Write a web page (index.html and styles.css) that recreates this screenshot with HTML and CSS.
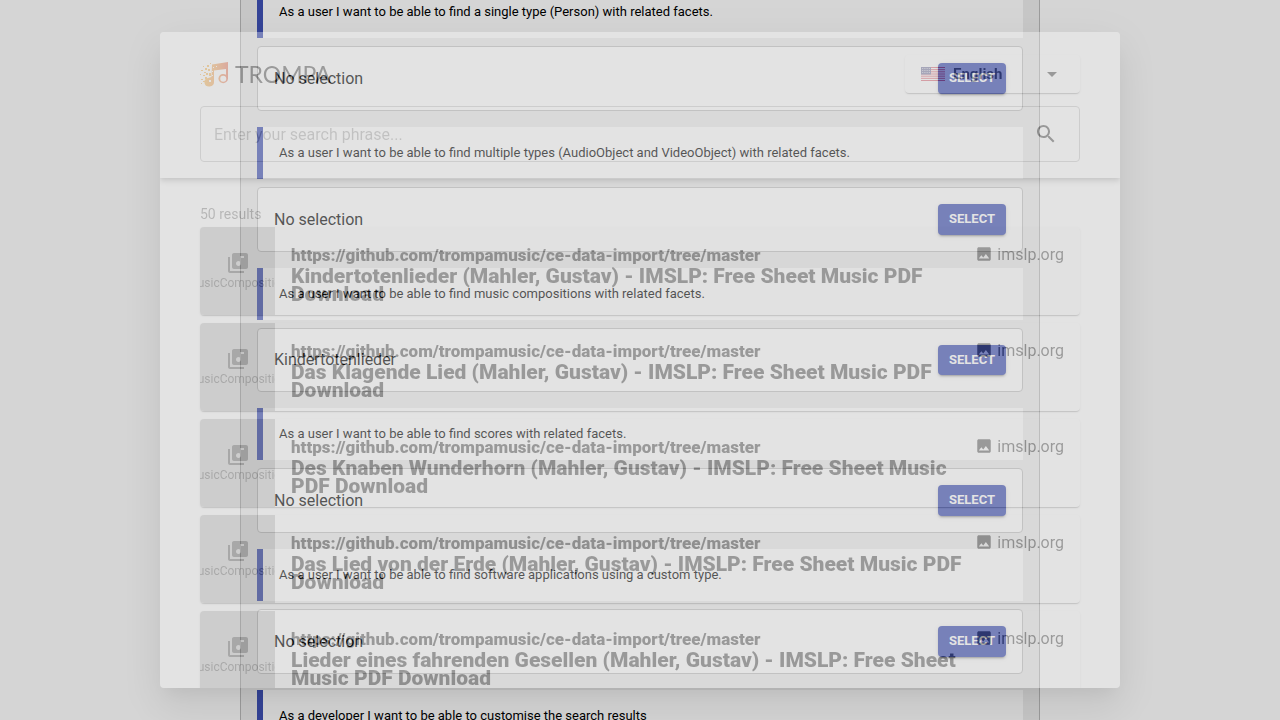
FILE: index.html
```html
<!DOCTYPE html>
<html lang="en">
<head>
<meta charset="utf-8">
<title>Trompa search</title>
<meta name="viewport" content="width=device-width, initial-scale=1">
<link rel="stylesheet" href="styles.css">
</head>
<body>
<svg class="defs" aria-hidden="true">
  <symbol id="library-music" viewBox="0 0 24 24"><path d="M20 2H8c-1.100 0-2 .9-2 2v12c0 1.100.9 2 2 2h12c1.100 0 2-.9 2-2V4c0-1.100-.9-2-2-2zm-2 5h-3v5.500c0 1.380-1.120 2.500-2.500 2.500S10 13.880 10 12.500s1.120-2.500 2.500-2.500c.57 0 1.080.19 1.500.51V5h4v2zM4 6H2v14c0 1.100.9 2 2 2h14v-2H4V6z"/></symbol>
  <symbol id="image" viewBox="0 0 24 24"><path d="M21 19V5c0-1.100-.9-2-2-2H5c-1.100 0-2 .9-2 2v14c0 1.100.9 2 2 2h14c1.100 0 2-.9 2-2zM8.500 13.500l2.500 3.010L14.500 12l4.500 6H5l3.500-4.500z"/></symbol>
</svg>

<main class="page">
  <div class="stories">
    <blockquote class="story">As a user I want to be able to find a single type (Person) with related facets.</blockquote>
    <div class="picker"><span>No selection</span><button class="select-button" type="button">SELECT</button></div>
    <blockquote class="story">As a user I want to be able to find multiple types (AudioObject and VideoObject) with related facets.</blockquote>
    <div class="picker"><span>No selection</span><button class="select-button" type="button">SELECT</button></div>
    <blockquote class="story">As a user I want to be able to find music compositions with related facets.</blockquote>
    <div class="picker"><span>Kindertotenlieder</span><button class="select-button" type="button">SELECT</button></div>
    <blockquote class="story">As a user I want to be able to find scores with related facets.</blockquote>
    <div class="picker"><span>No selection</span><button class="select-button" type="button">SELECT</button></div>
    <blockquote class="story">As a user I want to be able to find software applications using a custom type.</blockquote>
    <div class="picker"><span>No selection</span><button class="select-button" type="button">SELECT</button></div>
    <blockquote class="story">As a developer I want to be able to customise the search results</blockquote>
  </div>
</main>

<div class="backdrop"></div>
<div class="modal">
  <section class="dialog" role="dialog" aria-label="Search">
    <header class="dialog-header">
      <div class="top-row">
        <div class="logo">
          <svg class="logo-mark" viewBox="0 0 29 26" aria-hidden="true">
            <defs><linearGradient id="flame" x1="0" x2="1"><stop offset="0" stop-color="#f5a32a"/><stop offset=".5" stop-color="#f08a2c"/><stop offset="1" stop-color="#e4512f"/></linearGradient></defs>
            <path fill="url(#flame)" fill-rule="evenodd" d="M12 3.500 28 1v16.500a4.800 4.600 0 1 1-2-3.700V8L14 9.500v11.500a4.800 4.300 0 1 1-6-4l3.500-1zM23.200 14.800a3 3 0 1 0 .1 6 3 3 0 0 0-.1-6z"/>
            <path fill="#f5a32a" d="M7 4h2v2H7zM5 7h2v2H5zM8 8h2v2H8zM4 11h2v1H4zM1 9h2v1H1zM0 13h1v1H0zM3 14h2v1H3zM6 12h2v2H6zM9 12h2v3H9zM1 18h2v1H1zM3 20h2v1H3zM3 5h1v1H3zM10 2h1v1h-1zM1 22h1v1H1zM5 16h2v2H5z"/>
            <path fill="#fff" d="M13 6h1v1h-1zM16 5h1v1h-1zM12 10h1v1h-1zM9 19h2v2H9zM12 14h1v1h-1z"/>
          </svg>
          <span class="logo-text">TROMPA</span>
        </div>
        <button class="language" type="button">
          <svg class="flag" viewBox="0 0 24 14" aria-hidden="true">
            <path fill="#fff" d="M0 0h24v14H0z"/>
            <path stroke="#d02f44" d="M0 .5h24M0 2.660h24M0 4.820h24M0 7h24M0 9.160h24M0 11.320h24M0 13.500h24"/>
            <path fill="#46467f" d="M0 0h10v7.500H0z"/>
            <path stroke="#fff" stroke-width=".7" stroke-dasharray=".8 1" d="M1 1.500h8M1 3.500h8M1 5.500h8"/>
          </svg>
          <span class="language-name">English</span>
          <svg class="caret" viewBox="0 0 24 24" aria-hidden="true"><path d="M7 10l5 5 5-5z"/></svg>
        </button>
      </div>
      <form class="search">
        <input class="search-input" type="text" aria-label="Search phrase" placeholder="Enter your search phrase...">
        <button class="search-button" type="button" aria-label="Search">
          <svg viewBox="0 0 24 24" aria-hidden="true"><path d="M15.500 14h-.79l-.28-.27C15.410 12.590 16 11.110 16 9.500 16 5.910 13.090 3 9.500 3S3 5.910 3 9.500 5.910 16 9.500 16c1.610 0 3.090-.59 4.230-1.570l.27.28v.79l5 4.990L20.490 19l-4.990-5zm-6 0C7.010 14 5 11.990 5 9.500S7.010 5 9.500 5 14 7.010 14 9.500 11.990 14 9.500 14z"/></svg>
        </button>
      </form>
    </header>
    <div class="results">
      <p class="count">50 results</p>
      <article class="card card-hover">
        <div class="kind"><svg viewBox="0 0 24 24" aria-hidden="true"><use href="#library-music"/></svg><span>MusicComposition</span></div>
        <div class="info"><p class="url">https://github.com/trompamusic/ce-data-import/tree/master</p><h2 class="title">Kindertotenlieder (Mahler, Gustav) - IMSLP: Free Sheet Music PDF Download</h2></div>
        <div class="source"><svg viewBox="0 0 24 24" aria-hidden="true"><use href="#image"/></svg><span>imslp.org</span></div>
      </article>
      <article class="card">
        <div class="kind"><svg viewBox="0 0 24 24" aria-hidden="true"><use href="#library-music"/></svg><span>MusicComposition</span></div>
        <div class="info"><p class="url">https://github.com/trompamusic/ce-data-import/tree/master</p><h2 class="title">Das Klagende Lied (Mahler, Gustav) - IMSLP: Free Sheet Music PDF Download</h2></div>
        <div class="source"><svg viewBox="0 0 24 24" aria-hidden="true"><use href="#image"/></svg><span>imslp.org</span></div>
      </article>
      <article class="card">
        <div class="kind"><svg viewBox="0 0 24 24" aria-hidden="true"><use href="#library-music"/></svg><span>MusicComposition</span></div>
        <div class="info"><p class="url">https://github.com/trompamusic/ce-data-import/tree/master</p><h2 class="title">Des Knaben Wunderhorn (Mahler, Gustav) - IMSLP: Free Sheet Music PDF Download</h2></div>
        <div class="source"><svg viewBox="0 0 24 24" aria-hidden="true"><use href="#image"/></svg><span>imslp.org</span></div>
      </article>
      <article class="card">
        <div class="kind"><svg viewBox="0 0 24 24" aria-hidden="true"><use href="#library-music"/></svg><span>MusicComposition</span></div>
        <div class="info"><p class="url">https://github.com/trompamusic/ce-data-import/tree/master</p><h2 class="title">Das Lied von der Erde (Mahler, Gustav) - IMSLP: Free Sheet Music PDF Download</h2></div>
        <div class="source"><svg viewBox="0 0 24 24" aria-hidden="true"><use href="#image"/></svg><span>imslp.org</span></div>
      </article>
      <article class="card">
        <div class="kind"><svg viewBox="0 0 24 24" aria-hidden="true"><use href="#library-music"/></svg><span>MusicComposition</span></div>
        <div class="info"><p class="url">https://github.com/trompamusic/ce-data-import/tree/master</p><h2 class="title">Lieder eines fahrenden Gesellen (Mahler, Gustav) - IMSLP: Free Sheet Music PDF Download</h2></div>
        <div class="source"><svg viewBox="0 0 24 24" aria-hidden="true"><use href="#image"/></svg><span>imslp.org</span></div>
      </article>
    </div>
  </section>
</div>
</body>
</html>
```

FILE: styles.css
```css
* { box-sizing: border-box; }

html, body { height: 100%; }

body {
  margin: 0;
  overflow: hidden;
  background: #fff;
  color: #000;
  font-family: Roboto, "Liberation Sans", sans-serif;
  font-size: 16px;
}

button, input { font-family: inherit; }
.defs { display: none; }

/* Page behind the dialog, scrolled part of the way down */
.page {
  height: 100%;
  overflow: hidden;
}

.stories {
  max-width: 800px;
  margin: -14px auto 0;
  padding: 0 16px;
  background: #eee;
  border: 1px solid #bbb;
  border-width: 0 1px;
}

.story {
  margin: 0 0 8px;
  padding: 16px;
  border-left: 6px solid #3f51b5;
  background: #fff;
  font-size: 13px;
  line-height: 20px;
}

.picker {
  display: flex;
  align-items: center;
  justify-content: space-between;
  margin-bottom: 16px;
  padding: 16px;
  border: 1px solid #c4c4c4;
  border-radius: 4px;
  background: #fff;
}

.select-button {
  min-width: 68px;
  padding: 4px 10px;
  border: 0;
  border-radius: 4px;
  background: #3f51b5;
  color: #fff;
  font-size: 13px;
  font-weight: 700;
  line-height: 1.75;
  box-shadow: 0 3px 1px -2px rgba(0, 0, 0, .2), 0 2px 2px rgba(0, 0, 0, .14), 0 1px 5px rgba(0, 0, 0, .12);
}

/* Dialog, part of the way through its fade-in */
.backdrop {
  position: fixed;
  inset: 0;
  background: rgba(0, 0, 0, .165);
}

.modal {
  position: fixed;
  inset: 0;
  display: flex;
  justify-content: center;
  padding: 32px;
  opacity: .33;
}

.dialog {
  display: flex;
  flex-direction: column;
  width: 100%;
  max-width: 960px;
  overflow: hidden;
  border-radius: 4px;
  background: #fff;
  color: rgba(0, 0, 0, .87);
  box-shadow: 0 11px 15px -7px rgba(0, 0, 0, .2), 0 24px 38px 3px rgba(0, 0, 0, .14), 0 9px 46px 8px rgba(0, 0, 0, .12);
}

.dialog-header {
  position: relative;
  flex: none;
  padding: 23px 40px 16px;
  background: #fff;
  box-shadow: 0 2px 4px -1px rgba(0, 0, 0, .2), 0 4px 5px rgba(0, 0, 0, .14), 0 1px 10px rgba(0, 0, 0, .12);
}

.top-row {
  display: flex;
  align-items: center;
  justify-content: space-between;
  margin-bottom: 13px;
}

.logo { display: flex; align-items: center; gap: 6px; }
.logo-mark { width: 29px; height: 26px; }

.logo-text {
  color: #222;
  font-family: Lato, "Liberation Sans", sans-serif;
  font-size: 23px;
  line-height: 28px;
}

.language {
  display: flex;
  align-items: center;
  width: 175px;
  height: 38px;
  padding: 0 16px;
  border: 0;
  border-radius: 4px;
  background: #fff;
  color: rgba(0, 0, 0, .87);
  box-shadow: 0 2px 1px -1px rgba(0, 0, 0, .2), 0 1px 1px rgba(0, 0, 0, .14), 0 1px 3px rgba(0, 0, 0, .12);
}

.flag { width: 24px; height: 14px; }

.language-name {
  flex: 1;
  margin-left: 8px;
  text-align: left;
  font-size: 15px;
  font-weight: 700;
}

.caret { width: 24px; height: 24px; fill: currentColor; }

.search {
  display: flex;
  align-items: center;
  height: 56px;
  padding: 0 21px 0 13px;
  border: 1px solid #bbb;
  border-radius: 4px;
}

.search-input {
  flex: 1;
  min-width: 0;
  padding: 0;
  border: 0;
  background: none;
  outline: 0;
  color: inherit;
  font-size: 16px;
}

.search-input::placeholder { color: rgba(0, 0, 0, .4); opacity: 1; }

.search-button {
  display: flex;
  padding: 0;
  border: 0;
  background: none;
  color: rgba(0, 0, 0, .87);
}

.search-button svg { width: 24px; height: 24px; fill: currentColor; }

.results {
  flex: 1;
  min-height: 0;
  overflow: hidden;
  padding: 24px 40px;
}

.count {
  margin: 0 0 1px;
  color: rgba(0, 0, 0, .54);
  font-size: 14px;
  line-height: 24px;
}

.card {
  display: flex;
  height: 88px;
  margin-bottom: 8px;
  overflow: hidden;
  border-radius: 4px;
  background: #fff;
  box-shadow: 0 2px 1px -1px rgba(0, 0, 0, .2), 0 1px 1px rgba(0, 0, 0, .14), 0 1px 3px rgba(0, 0, 0, .12);
}

.card-hover { background: #f7f7f7; }

.kind {
  display: flex;
  flex: none;
  flex-direction: column;
  align-items: center;
  justify-content: center;
  width: 75px;
  overflow: hidden;
  background: #bdbdbd;
  color: rgba(0, 0, 0, .6);
  font-size: 12px;
  line-height: 16px;
}

.kind svg { width: 24px; height: 24px; fill: currentColor; }

.info {
  flex: 1;
  min-width: 0;
  padding: 17px 0 0 16px;
}

.url {
  margin: 0;
  font-size: 17px;
  font-weight: 900;
  line-height: 22px;
}

.title {
  margin: 1px 0 0;
  font-size: 21px;
  font-weight: 900;
  line-height: 18px;
}

.source {
  display: flex;
  align-items: center;
  flex: none;
  gap: 4px;
  height: 22px;
  margin: 16px 16px 0 0;
}

.source svg { width: 18px; height: 18px; fill: currentColor; }
```
